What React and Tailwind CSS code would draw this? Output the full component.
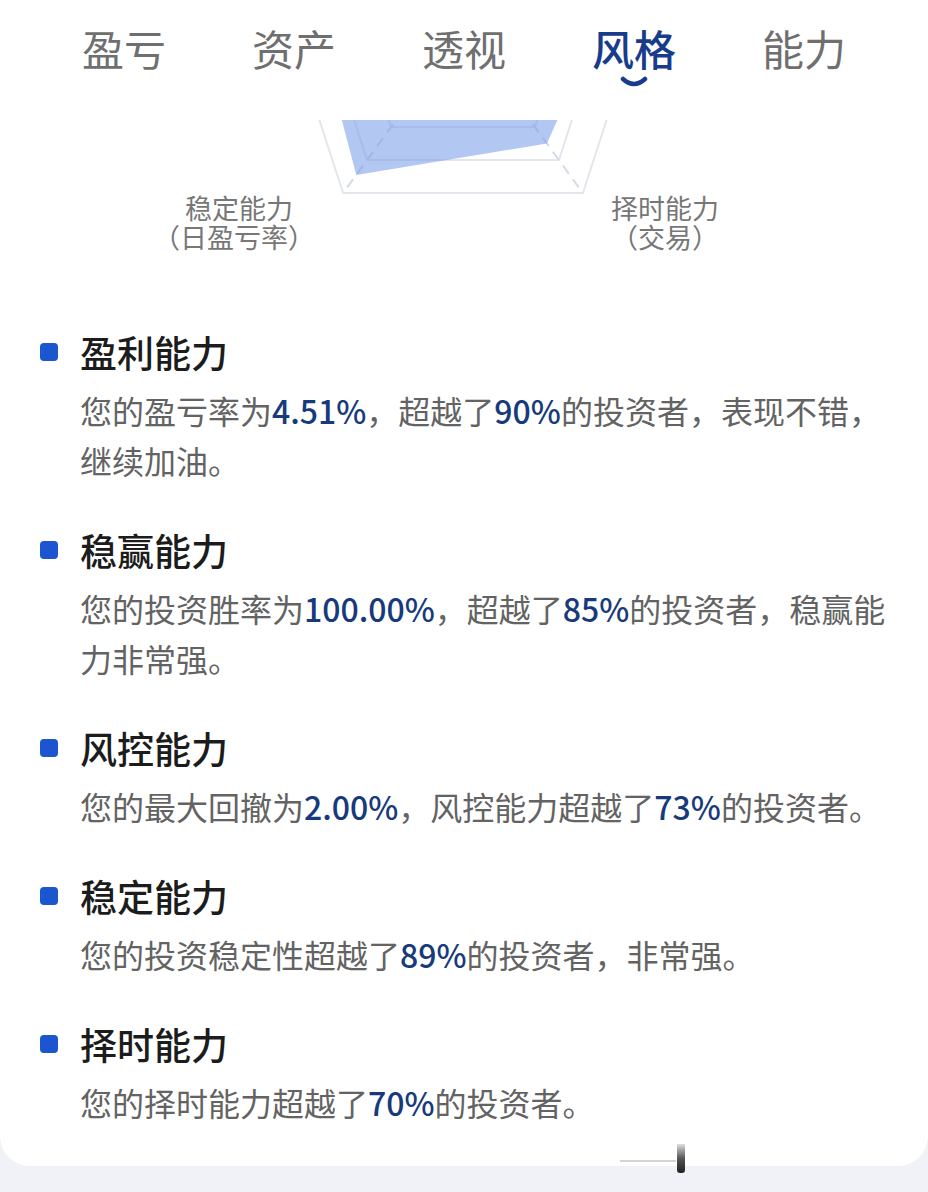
import React from 'react'

const FONT = { fontFamily: '"Noto Sans CJK SC", "Noto Sans", sans-serif' }

const tabs = ['盈亏', '资产', '透视', '风格', '能力']

const sections = [
  {
    title: '盈利能力',
    lines: [
      ['您的盈亏率为', { n: '4.51%' }, '，超越了', { n: '90%' }, '的投资者，表现不错，'],
      ['继续加油。'],
    ],
  },
  {
    title: '稳赢能力',
    lines: [
      ['您的投资胜率为', { n: '100.00%' }, '，超越了', { n: '85%' }, '的投资者，稳赢能'],
      ['力非常强。'],
    ],
  },
  {
    title: '风控能力',
    lines: [['您的最大回撤为', { n: '2.00%' }, '，风控能力超越了', { n: '73%' }, '的投资者。']],
  },
  {
    title: '稳定能力',
    lines: [['您的投资稳定性超越了', { n: '89%' }, '的投资者，非常强。']],
  },
  {
    title: '择时能力',
    lines: [['您的择时能力超越了', { n: '70%' }, '的投资者。']],
  },
]

// radar geometry, in page coordinates (chart is clipped by the header)
const CX = 463
const CY = 28
const R = 204
const dirs = [0, 72, 144, 216, 288].map((a) => {
  const r = (a * Math.PI) / 180
  return [Math.sin(r), -Math.cos(r)]
})
const pt = (i, v) => `${(CX + dirs[i][0] * R * v).toFixed(1)},${(CY + dirs[i][1] * R * v).toFixed(1)}`
const ring = (v) => dirs.map((_, i) => pt(i, v)).join(' ')
// 盈利, 稳赢, 择时, 稳定, 风控
const values = [0.9, 0.82, 0.7, 0.89, 0.82]

const Radar = () => (
  <svg width="928" height="140" viewBox="0 120 928 140" className="block">
    {[0.2, 0.4, 0.6, 0.8, 1].map((v) => (
      <polygon key={v} points={ring(v)} fill="none" stroke="#e3e6ec" strokeWidth="2" />
    ))}
    {dirs.map((_, i) => (
      <line
        key={i}
        x1={CX}
        y1={CY}
        x2={CX + dirs[i][0] * R}
        y2={CY + dirs[i][1] * R}
        stroke="#d3d9e6"
        strokeWidth="2"
        strokeDasharray="10 7"
      />
    ))}
    <polygon points={values.map((v, i) => pt(i, v)).join(' ')} fill="#7a9fe9" fillOpacity="0.58" />
    <g fill="#777777" fontSize="27" textAnchor="middle" style={FONT}>
      <text x="239" y="219">稳定能力</text>
      <text x="234" y="248">（日盈亏率）</text>
      <text x="665" y="219">择时能力</text>
      <text x="665" y="248">（交易）</text>
    </g>
  </svg>
)

export default function App() {
  return (
    <div className="relative w-[928px] min-h-[1192px] bg-[#f0f2f7]" style={FONT}>
      <div className="bg-white rounded-b-[30px] pb-[39px]">
        {/* tabs */}
        <div className="h-[120px] px-[39px] pt-[24px] flex">
          {tabs.map((t) => {
            const active = t === '风格'
            return (
              <div key={t} className="flex-1 flex flex-col items-center">
                <span
                  className={`text-[42px] leading-[48px] ${active ? 'text-[#183c8c] font-medium' : 'text-[#6f6f6f]'}`}
                >
                  {t}
                </span>
                {active && (
                  <svg width="30" height="12" viewBox="0 0 30 12" className="mt-[4px]">
                    <path d="M4 3 Q15 13 26 3" fill="none" stroke="#183c8c" strokeWidth="4.5" strokeLinecap="round" />
                  </svg>
                )}
              </div>
            )
          })}
        </div>

        <Radar />

        {/* ability list */}
        <div className="px-[40px] pt-[67px] flex flex-col gap-[40px]">
          {sections.map((s) => (
            <div key={s.title}>
              <div className="flex items-center gap-[22px] h-[50px]">
                <span className="w-[18px] h-[18px] rounded-[4px] bg-[#1b55d0]" />
                <span className="text-[37px] leading-[50px] font-medium text-[#1c1c1c]">{s.title}</span>
              </div>
              <div className="mt-[8px] pl-[40px] text-[32px] leading-[50px] text-[#636363] whitespace-nowrap">
                {s.lines.map((ln, i) => (
                  <div key={i}>
                    {ln.map((p, j) =>
                      typeof p === 'string' ? (
                        <span key={j}>{p}</span>
                      ) : (
                        <span key={j} className="text-[#173a7c] font-medium">
                          {p.n}
                        </span>
                      ),
                    )}
                  </div>
                ))}
              </div>
            </div>
          ))}
        </div>
      </div>

      {/* faint watermark artefact */}
      <div className="absolute left-[620px] top-[1160px] w-[56px] h-[2px] bg-[#d4d4d4]" />
      <div className="absolute left-[677px] top-[1144px] w-[8px] h-[29px] rounded-b-[3px] bg-gradient-to-b from-[#e0e0e0] via-[#555555] to-[#222222]" />
    </div>
  )
}
